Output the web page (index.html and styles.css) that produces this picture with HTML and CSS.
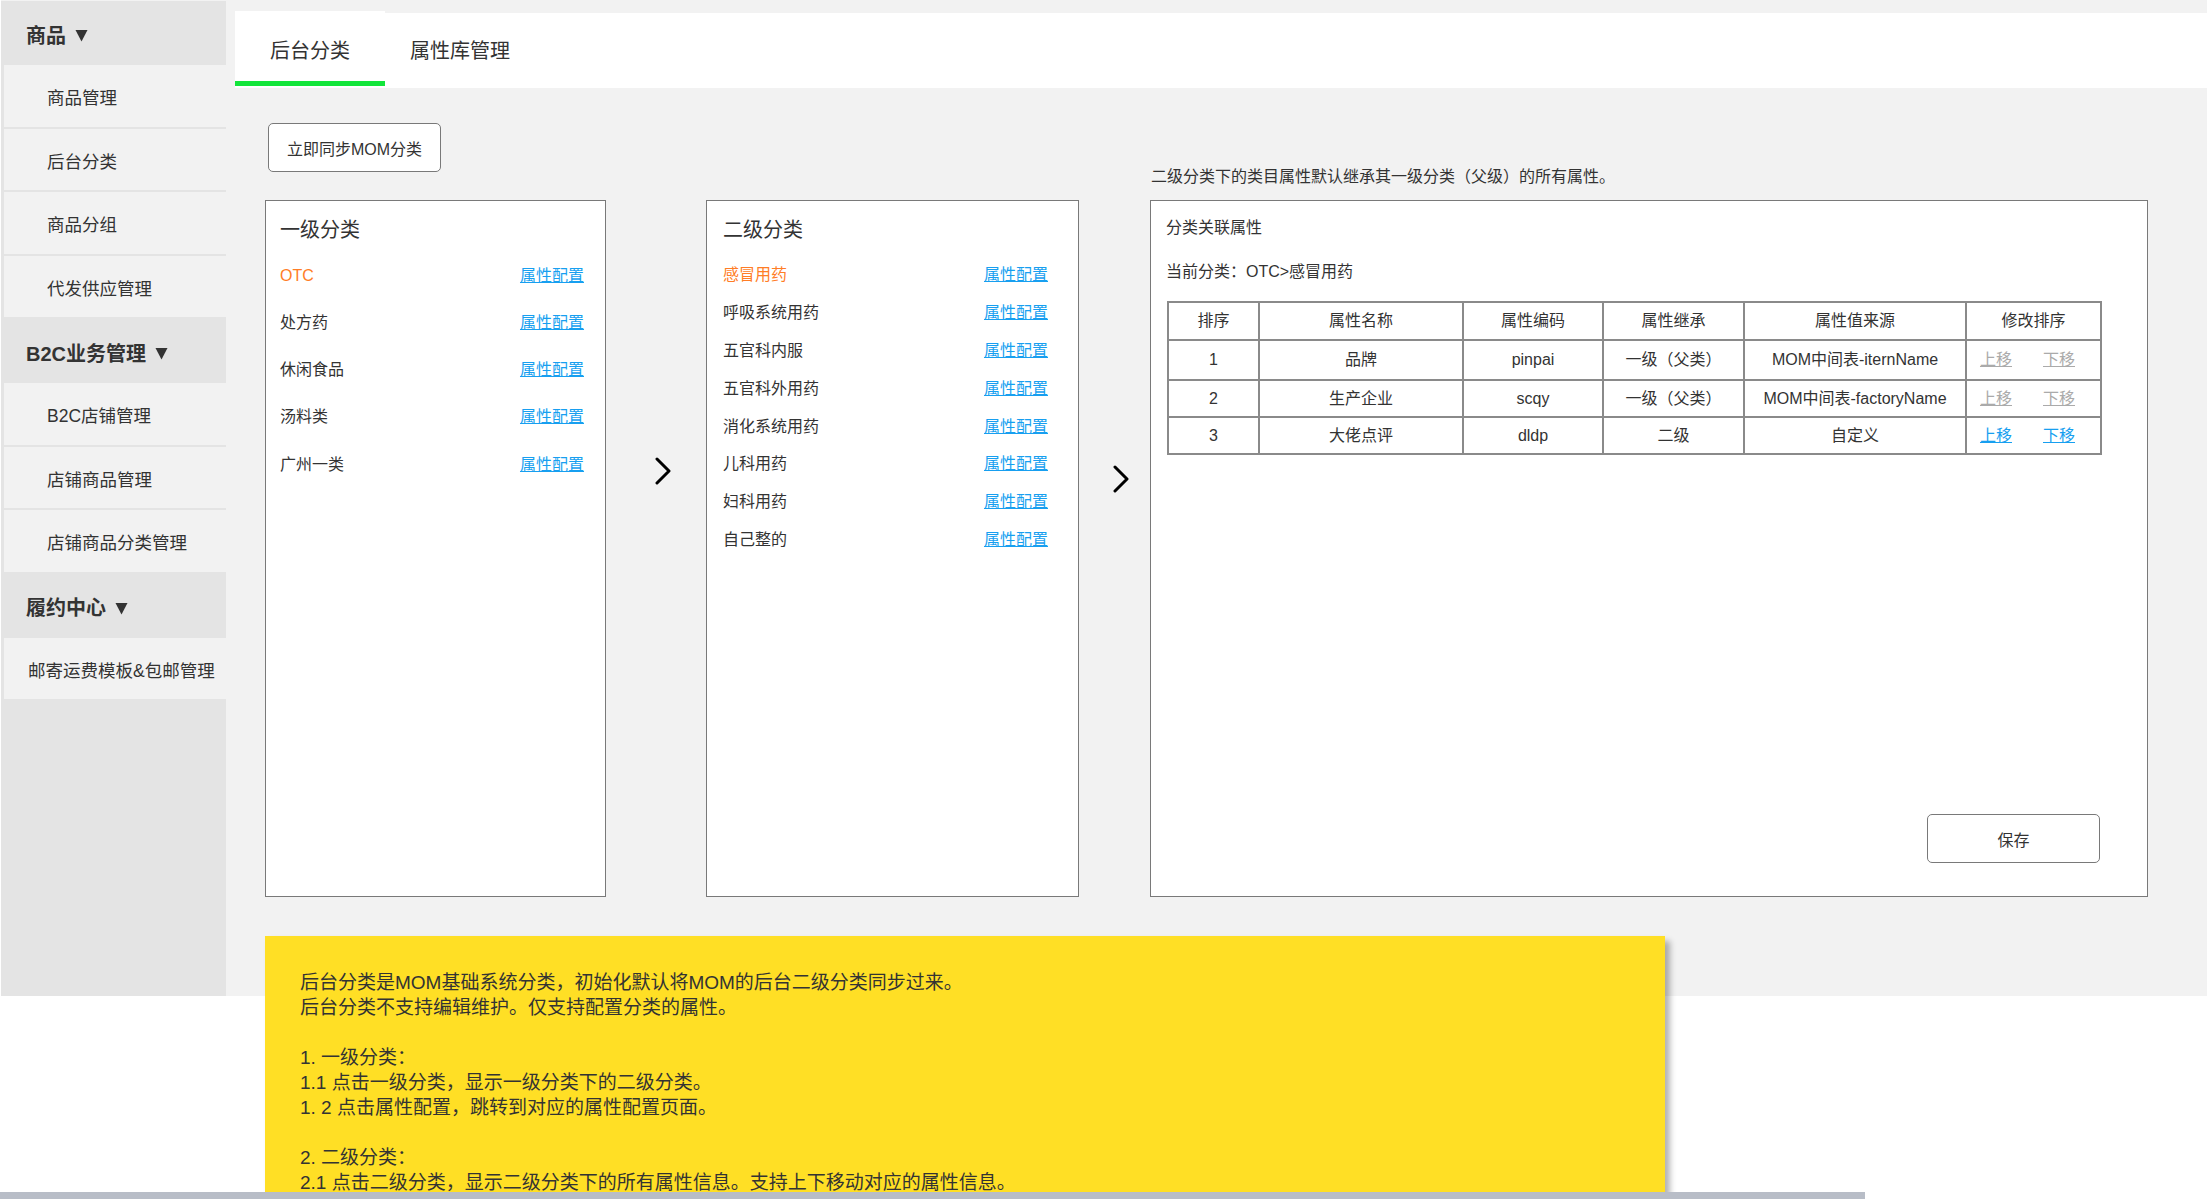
FILE: index.html
```html
<!DOCTYPE html>
<html lang="zh-CN">
<head>
<meta charset="utf-8">
<title>后台分类</title>
<link rel="stylesheet" href="styles.css">
</head>
<body>
<div class="page">
  <aside class="sidebar">
    <div class="nav-head">商品<svg class="caret" width="13" height="13" viewBox="0 0 13 13"><polygon points="0.5,1 12.5,1 6.5,12.5" fill="#333"/></svg></div>
    <div class="nav-item">商品管理</div>
    <div class="nav-item">后台分类</div>
    <div class="nav-item">商品分组</div>
    <div class="nav-item">代发供应管理</div>
    <div class="nav-head">B2C业务管理<svg class="caret" width="13" height="13" viewBox="0 0 13 13"><polygon points="0.5,1 12.5,1 6.5,12.5" fill="#333"/></svg></div>
    <div class="nav-item">B2C店铺管理</div>
    <div class="nav-item">店铺商品管理</div>
    <div class="nav-item">店铺商品分类管理</div>
    <div class="nav-head">履约中心<svg class="caret" width="13" height="13" viewBox="0 0 13 13"><polygon points="0.5,1 12.5,1 6.5,12.5" fill="#333"/></svg></div>
    <div class="nav-item flat">邮寄运费模板&amp;包邮管理</div>
  </aside>

  <main class="main">
    <div class="tabs">
      <div class="tab active">后台分类</div>
      <div class="tab">属性库管理</div>
    </div>

    <div class="board">
      <button class="btn sync">立即同步MOM分类</button>
      <p class="hint">二级分类下的类目属性默认继承其一级分类（父级）的所有属性。</p>

      <section class="panel panel-l1">
        <h2 class="panel-title">一级分类</h2>
        <ul class="cat-list">
          <li class="cat-row"><span class="cat-name current">OTC</span><a class="cfg">属性配置</a></li>
          <li class="cat-row"><span class="cat-name">处方药</span><a class="cfg">属性配置</a></li>
          <li class="cat-row"><span class="cat-name">休闲食品</span><a class="cfg">属性配置</a></li>
          <li class="cat-row"><span class="cat-name">汤料类</span><a class="cfg">属性配置</a></li>
          <li class="cat-row"><span class="cat-name">广州一类</span><a class="cfg">属性配置</a></li>
        </ul>
      </section>

      <div class="arrow arrow-1">
        <svg width="16" height="28" viewBox="0 0 16 28"><path d="M2 2 L14 14 L2 26" fill="none" stroke="#000" stroke-width="3" stroke-linecap="round" stroke-linejoin="round"/></svg>
      </div>

      <section class="panel panel-l2">
        <h2 class="panel-title">二级分类</h2>
        <ul class="cat-list">
          <li class="cat-row"><span class="cat-name current">感冒用药</span><a class="cfg">属性配置</a></li>
          <li class="cat-row"><span class="cat-name">呼吸系统用药</span><a class="cfg">属性配置</a></li>
          <li class="cat-row"><span class="cat-name">五官科内服</span><a class="cfg">属性配置</a></li>
          <li class="cat-row"><span class="cat-name">五官科外用药</span><a class="cfg">属性配置</a></li>
          <li class="cat-row"><span class="cat-name">消化系统用药</span><a class="cfg">属性配置</a></li>
          <li class="cat-row"><span class="cat-name">儿科用药</span><a class="cfg">属性配置</a></li>
          <li class="cat-row"><span class="cat-name">妇科用药</span><a class="cfg">属性配置</a></li>
          <li class="cat-row"><span class="cat-name">自己整的</span><a class="cfg">属性配置</a></li>
        </ul>
      </section>

      <div class="arrow arrow-2">
        <svg width="16" height="28" viewBox="0 0 16 28"><path d="M2 2 L14 14 L2 26" fill="none" stroke="#000" stroke-width="3" stroke-linecap="round" stroke-linejoin="round"/></svg>
      </div>

      <section class="panel panel-attr">
        <h3 class="attr-title">分类关联属性</h3>
        <p class="attr-current">当前分类：OTC&gt;感冒用药</p>
        <table class="attr-table">
          <colgroup>
            <col class="c-sort"><col class="c-name"><col class="c-code"><col class="c-inherit"><col class="c-source"><col class="c-move">
          </colgroup>
          <thead>
            <tr class="r-head"><th>排序</th><th>属性名称</th><th>属性编码</th><th>属性继承</th><th>属性值来源</th><th>修改排序</th></tr>
          </thead>
          <tbody>
            <tr class="r-1"><td>1</td><td>品牌</td><td>pinpai</td><td>一级（父类）</td><td>MOM中间表-iternName</td><td class="move"><a class="mv off">上移</a><a class="mv off">下移</a></td></tr>
            <tr class="r-2"><td>2</td><td>生产企业</td><td>scqy</td><td>一级（父类）</td><td>MOM中间表-factoryName</td><td class="move"><a class="mv off">上移</a><a class="mv off">下移</a></td></tr>
            <tr class="r-3"><td>3</td><td>大佬点评</td><td>dldp</td><td>二级</td><td>自定义</td><td class="move"><a class="mv on">上移</a><a class="mv on">下移</a></td></tr>
          </tbody>
        </table>
        <div class="attr-foot">
          <button class="btn save">保存</button>
        </div>
      </section>
    </div>

    <div class="note">
      <p>后台分类是MOM基础系统分类，初始化默认将MOM的后台二级分类同步过来。</p>
      <p>后台分类不支持编辑维护。仅支持配置分类的属性。</p>
      <p class="blank">&nbsp;</p>
      <p>1. 一级分类：</p>
      <p>1.1 点击一级分类，显示一级分类下的二级分类。</p>
      <p>1. 2 点击属性配置，跳转到对应的属性配置页面。</p>
      <p class="blank">&nbsp;</p>
      <p>2. 二级分类：</p>
      <p>2.1 点击二级分类，显示二级分类下的所有属性信息。支持上下移动对应的属性信息。</p>
    </div>
  </main>
</div>
<div class="hscroll"></div>
</body>
</html>
```

FILE: styles.css
```css
html, body {
  margin: 0;
  padding: 0;
  background: #ffffff;
  overflow: hidden;
  height: 100%;
}

body {
  font-family: "Liberation Sans", "Noto Sans CJK SC", sans-serif;
  color: #333333;
}

p, h2, h3, ul {
  margin: 0;
  padding: 0;
}

/* ---------- page frame ---------- */
.page {
  display: flex;
  height: 996px;
  margin-left: 1px;
  background: #f2f2f2;
}

/* ---------- sidebar ---------- */
.sidebar {
  width: 225px;
  flex: 0 0 225px;
  margin-top: 1px;
  background: #e4e4e4;
  display: flex;
  flex-direction: column;
}

.nav-head {
  height: 64px;
  flex: 0 0 64px;
  box-sizing: border-box;
  display: flex;
  align-items: center;
  padding: 5px 0 0 25px;
  font-size: 20px;
  font-weight: bold;
  line-height: 24px;
}

.caret {
  margin-left: 9px;
}

.nav-item {
  height: 61.5px;
  flex: 0 0 61.5px;
  box-sizing: border-box;
  margin: 0 0 2px 3px;
  padding: 5px 0 0 43px;
  background: #f2f2f2;
  display: flex;
  align-items: center;
  font-size: 17.5px;
  line-height: 24px;
}

.nav-item.flat {
  padding-left: 24px;
}

/* ---------- main ---------- */
.main {
  flex: 1;
  min-width: 0;
}

.tabs {
  display: flex;
  align-items: flex-start;
  height: 75px;
  margin: 13px 0 0 9px;
  background: #ffffff;
}

.tab {
  width: 150px;
  height: 75px;
  box-sizing: border-box;
  display: flex;
  align-items: center;
  justify-content: center;
  font-size: 20px;
  line-height: 26px;
}

.tab.active {
  margin-top: -2px;
  padding-top: 9px;
  background: #ffffff;
  border-bottom: 5px solid #12e53a;
}

.board {
  display: grid;
  grid-template-columns: 341px 100px 373px 71px 998px;
  grid-template-rows: 77px 697px;
  margin: 35px 0 0 39px;
}

.btn {
  font-family: "Liberation Sans", "Noto Sans CJK SC", sans-serif;
  font-size: 16px;
  color: #333333;
  background: #ffffff;
  border: 1px solid #797979;
  border-radius: 5px;
  width: 173px;
  height: 49px;
  padding: 0;
  cursor: pointer;
}

.sync {
  grid-column: 1;
  grid-row: 1;
  margin-left: 3px;
}

.hint {
  grid-column: 5;
  grid-row: 1;
  margin: 43px 0 0 1px;
  font-size: 16px;
  line-height: 22px;
}

/* ---------- panels ---------- */
.panel {
  grid-row: 2;
  background: #ffffff;
  border: 1px solid #797979;
  box-sizing: border-box;
}

.panel-l1 {
  grid-column: 1;
  padding: 15px 21px 0 14px;
}

.panel-l2 {
  grid-column: 3;
  padding: 15px 30px 0 16px;
}

.panel-title {
  font-size: 20px;
  font-weight: normal;
  line-height: 28px;
}

.cat-list {
  list-style: none;
}

.panel-l1 .cat-list {
  margin-top: 8px;
}

.panel-l1 .cat-row {
  height: 47.25px;
}

.panel-l2 .cat-list {
  margin-top: 12px;
}

.panel-l2 .cat-row {
  height: 37.9px;
}

.cat-row {
  display: flex;
  align-items: center;
  justify-content: space-between;
  font-size: 16px;
  line-height: 22px;
}

.cat-name.current {
  color: #ff7d26;
}

.cfg {
  color: #179ff0;
  text-decoration: underline;
  cursor: pointer;
}

.arrow {
  grid-row: 2;
}

.arrow-1 {
  grid-column: 2;
  padding: 257px 0 0 49px;
}

.arrow-2 {
  grid-column: 4;
  padding: 265px 0 0 34px;
}

/* ---------- attribute panel ---------- */
.panel-attr {
  grid-column: 5;
  padding: 16px 47px 0 15px;
  display: flex;
  flex-direction: column;
}

.attr-title {
  font-size: 16px;
  font-weight: normal;
  line-height: 22px;
}

.attr-current {
  margin-top: 22px;
  font-size: 16px;
  line-height: 22px;
}

.attr-table {
  margin: 18px 0 0 1px;
  width: 933px;
  table-layout: fixed;
  border-collapse: collapse;
  border: 2px solid #8a8a8a;
  font-size: 16px;
}

.attr-table th,
.attr-table td {
  border: 2px solid #8a8a8a;
  padding: 0;
  text-align: center;
  font-weight: normal;
  line-height: 22px;
}

.c-sort { width: 91px; }
.c-name { width: 204px; }
.c-code { width: 140px; }
.c-inherit { width: 141px; }
.c-source { width: 222px; }
.c-move { width: 135px; }

.r-head { height: 38px; }
.r-1 { height: 40px; }
.r-2 { height: 37px; }
.r-3 { height: 37px; }

.attr-table td.move {
  padding-right: 12px;
}

.mv {
  text-decoration: underline;
  cursor: pointer;
}

.mv + .mv {
  margin-left: 31px;
}

.mv.off {
  color: #aaaaaa;
}

.mv.on {
  color: #179ff0;
}

.attr-foot {
  flex: 1;
  display: flex;
  align-items: flex-end;
  justify-content: flex-end;
  padding-bottom: 33px;
}

/* ---------- note ---------- */
.note {
  width: 1400px;
  box-sizing: border-box;
  margin: 39px 0 0 39px;
  padding: 34px 35px 40px 35px;
  background: #ffdf25;
  box-shadow: 5px 5px 6px rgba(0, 0, 0, 0.3);
  font-size: 19px;
  line-height: 25px;
}

/* ---------- overlay scrollbar ---------- */
.hscroll {
  position: fixed;
  left: 0;
  bottom: 0;
  width: 1865px;
  height: 7px;
  background: #b8bdc7;
}
```
